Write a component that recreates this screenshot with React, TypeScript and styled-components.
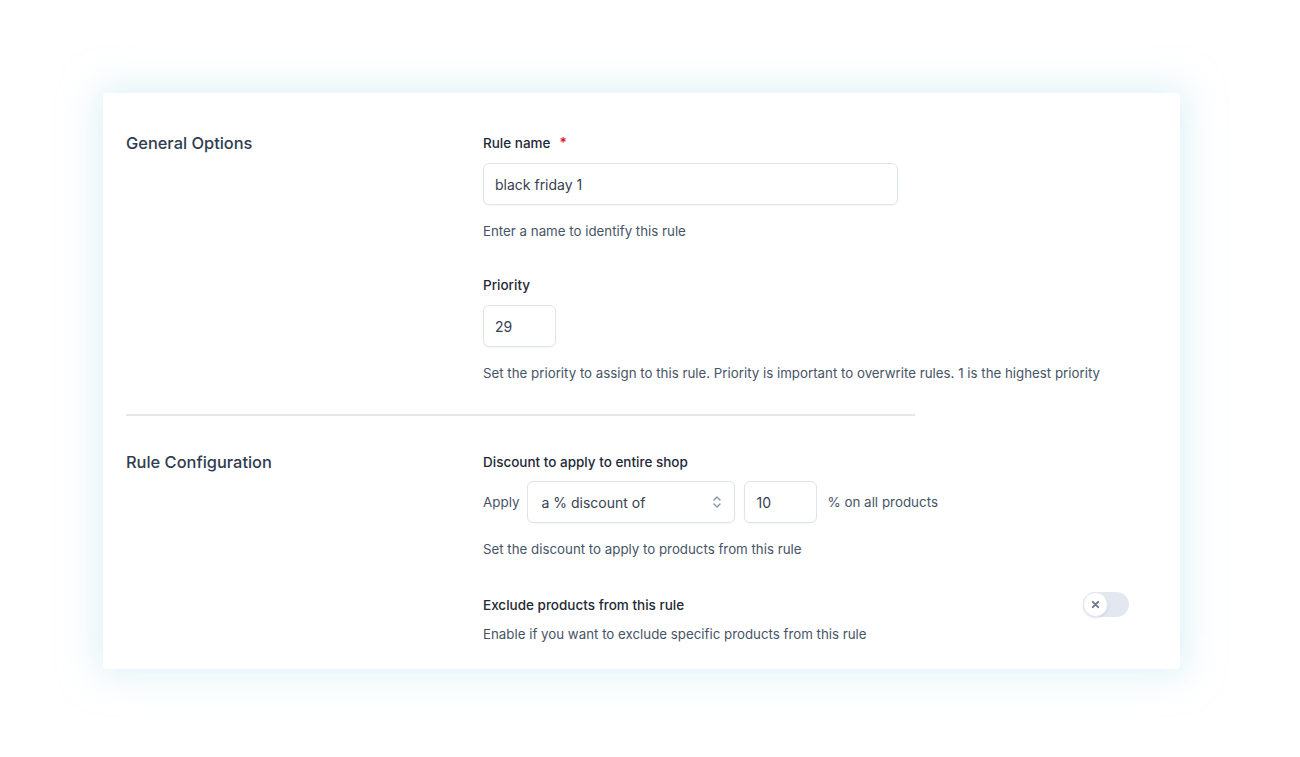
import React from "react";
import styled, { createGlobalStyle } from "styled-components";

const Global = createGlobalStyle`
  html, body { margin: 0; padding: 0; background: #ffffff; }
  body { font-family: Inter, "Noto Sans", "Liberation Sans", sans-serif; -webkit-font-smoothing: antialiased; }
  * { box-sizing: border-box; }
`;

const Page = styled.div`
  width: 1300px;
  height: 757px;
  padding: 93px 0 0 103px;
  background: #ffffff;
`;

const Card = styled.div`
  width: 1077px;
  height: 576px;
  background: #ffffff;
  border-radius: 4px;
  box-shadow: 0 0 36px 6px rgba(196, 230, 238, 0.55);
  padding: 40px 51px 25px 23px;
`;

const Section = styled.section`
  display: grid;
  grid-template-columns: 357px 1fr;
`;

const SectionTitle = styled.h2`
  margin: 0;
  font-size: 16.4px;
  line-height: 20px;
  font-weight: 500;
  color: #2f3d51;
`;

const Fields = styled.div`
  display: flex;
  flex-direction: column;
`;

const Field = styled.div<{ $gap?: number }>`
  display: flex;
  flex-direction: column;
  margin-top: ${(p) => p.$gap ?? 0}px;
`;

const Label = styled.label`
  font-size: 13.5px;
  line-height: 20px;
  font-weight: 500;
  color: #1f2937;
  display: flex;
  align-items: center;
`;

const Required = styled.span`
  color: #e0112b;
  margin-left: 9px;
  font-size: 14px;
`;

const Input = styled.div<{ $w: number }>`
  width: ${(p) => p.$w}px;
  height: 42px;
  flex-shrink: 0;
  border: 1px solid #dfe4ea;
  border-radius: 6px;
  background: #fff;
  display: flex;
  align-items: center;
  padding: 0 11px;
  font-size: 14px;
  color: #374151;
  box-shadow: 0 1px 2px rgba(15, 23, 42, 0.04);
`;

const InputSpaced = styled(Input)`
  margin-top: 10px;
`;

const Help = styled.p<{ $mt?: number }>`
  margin: ${(p) => p.$mt ?? 16}px 0 0;
  font-size: 13.3px;
  line-height: 20px;
  color: #475467;
  white-space: nowrap;
`;

const Divider = styled.hr`
  width: 789px;
  height: 0;
  border: none;
  border-top: 2px solid #e4e6e8;
  margin: 31px 0 36px;
`;

const ApplyRow = styled.div`
  display: flex;
  align-items: center;
  margin-top: 9px;
  font-size: 13.4px;
  color: #475467;
`;

const Select = styled(Input)`
  justify-content: space-between;
  margin: 0 9px 0 8px;
  padding: 0 12px 0 13px;
`;

const Suffix = styled.span`
  margin-left: 10px;
`;

const ToggleRow = styled.div`
  display: flex;
  align-items: center;
  justify-content: space-between;
  margin-top: 33px;
`;

const Track = styled.div`
  width: 46px;
  height: 25px;
  border-radius: 13px;
  background: #e3e8f0;
  position: relative;
`;

const Knob = styled.div`
  position: absolute;
  left: 0;
  top: 0;
  width: 25px;
  height: 25px;
  border-radius: 50%;
  background: #fff;
  border: 1px solid #e3e8f0;
  box-shadow: 0 1px 2px rgba(15, 23, 42, 0.12);
  display: flex;
  align-items: center;
  justify-content: center;
`;

const Chevrons = () => (
  <svg width="10" height="16" viewBox="0 0 10 16" fill="none" stroke="#8a94a3" strokeWidth="1.4" strokeLinecap="round" strokeLinejoin="round">
    <path d="M2 6 L5 3 L8 6" />
    <path d="M2 10 L5 13 L8 10" />
  </svg>
);

const XIcon = () => (
  <svg width="9" height="9" viewBox="0 0 10 10" fill="none" stroke="#6b7587" strokeWidth="2" strokeLinecap="round">
    <path d="M2 2 L8 8 M8 2 L2 8" />
  </svg>
);

export default function App() {
  return (
    <>
      <Global />
      <Page>
        <Card>
          <Section>
            <SectionTitle>General Options</SectionTitle>
            <Fields>
              <Field>
                <Label>
                  Rule name<Required>*</Required>
                </Label>
                <InputSpaced $w={415}>black friday 1</InputSpaced>
                <Help>Enter a name to identify this rule</Help>
              </Field>
              <Field $gap={34}>
                <Label>Priority</Label>
                <InputSpaced $w={73}>29</InputSpaced>
                <Help>
                  Set the priority to assign to this rule. Priority is important to overwrite rules. 1 is the highest priority
                </Help>
              </Field>
            </Fields>
          </Section>
          <Divider />
          <Section>
            <SectionTitle>Rule Configuration</SectionTitle>
            <Fields>
              <Field>
                <Label>Discount to apply to entire shop</Label>
                <ApplyRow>
                  <span>Apply</span>
                  <Select $w={208}>
                    <span>a % discount of</span>
                    <Chevrons />
                  </Select>
                  <Input $w={73}>10</Input>
                  <Suffix>% on all products</Suffix>
                </ApplyRow>
                <Help>Set the discount to apply to products from this rule</Help>
              </Field>
              <ToggleRow>
                <Label>Exclude products from this rule</Label>
                <Track>
                  <Knob>
                    <XIcon />
                  </Knob>
                </Track>
              </ToggleRow>
              <Help $mt={7}>Enable if you want to exclude specific products from this rule</Help>
            </Fields>
          </Section>
        </Card>
      </Page>
    </>
  );
}
